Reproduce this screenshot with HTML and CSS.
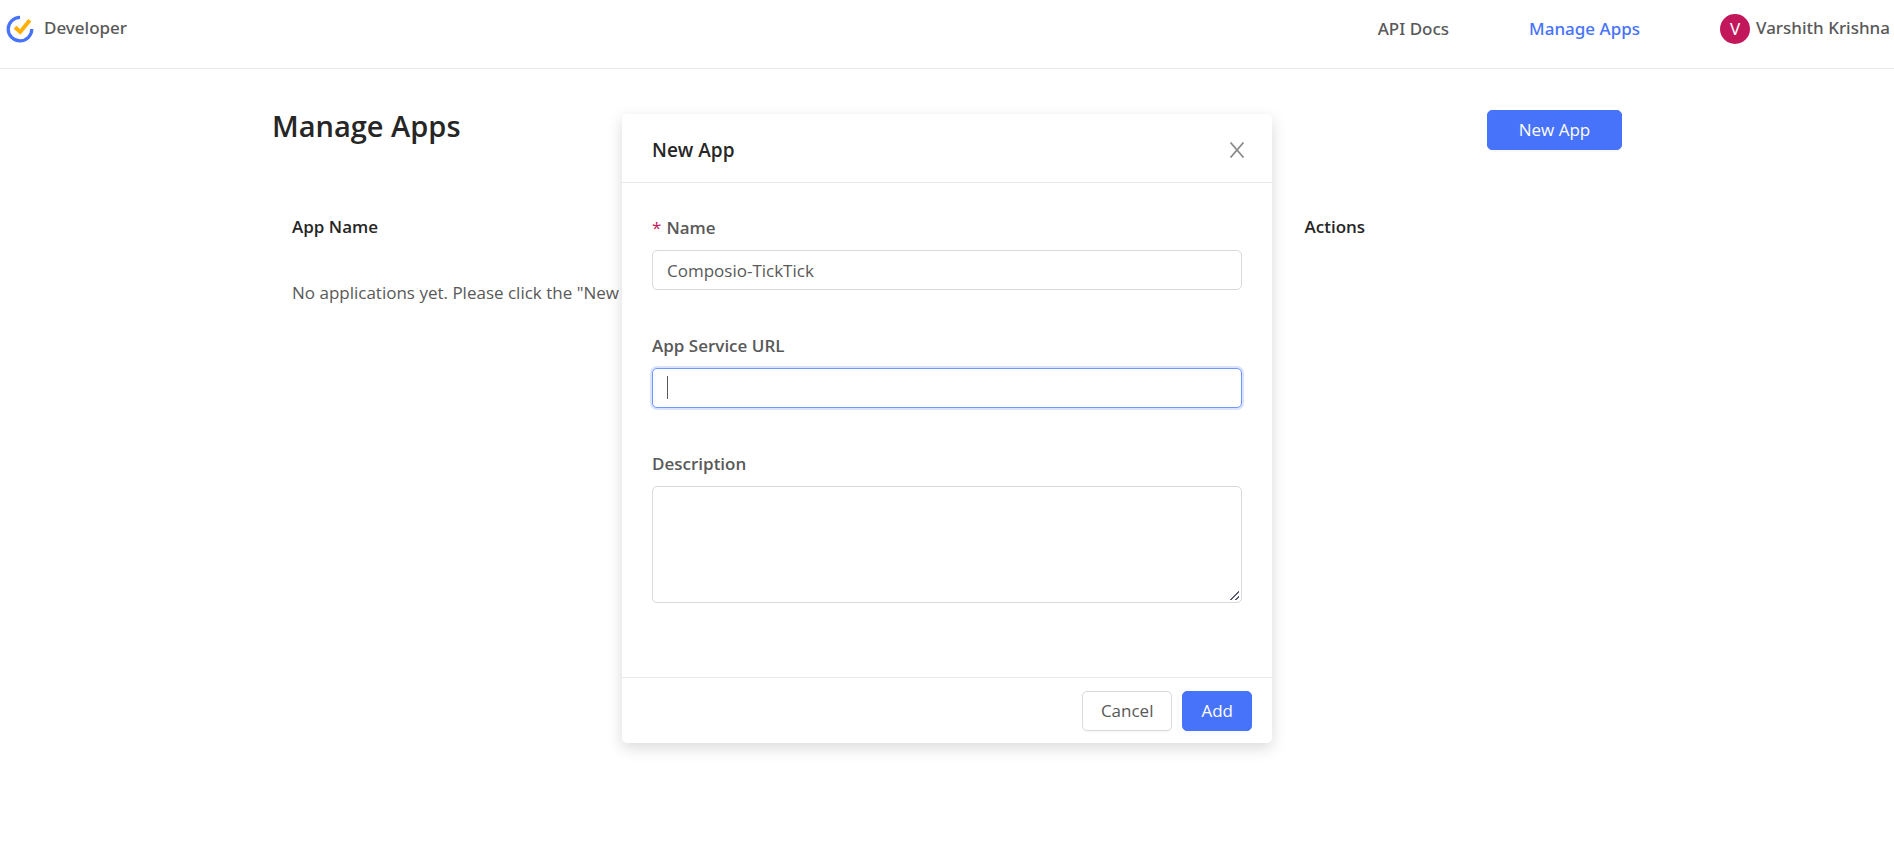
FILE: index.html
```html
<!DOCTYPE html>
<html lang="en">
  <head>
    <meta charset="utf-8" />
    <meta name="viewport" content="width=device-width, initial-scale=1" />
    <title>Manage Apps</title>
    <link rel="stylesheet" href="styles.css">
  </head>
  <body>
    <header class="header">
      <a class="logo" href="#">
        <svg class="logo-icon" viewBox="0 0 28 28" aria-hidden="true">
          <path d="M14 2.3A11.8 11.8 0 1 0 25.8 14" fill="none" stroke="#4772fa" stroke-width="3.2" />
          <path d="M9 12.3l5.2 4.6L23.8 5.2" fill="none" stroke="#ffb000" stroke-width="4" />
        </svg>
        <span>Developer</span>
      </a>
      <nav class="nav">
        <a class="nav-link" href="#">API Docs</a>
        <a class="nav-link active" href="#">Manage Apps</a>
        <a class="user" href="#">
          <span class="avatar">V</span>
          <span class="user-name">Varshith Krishna</span>
        </a>
      </nav>
    </header>

    <main class="container">
      <div class="title-row">
        <h1>Manage Apps</h1>
        <button class="btn btn-primary btn-new" type="button">New App</button>
      </div>
      <table class="apps">
        <thead>
          <tr>
            <th class="col-name">App Name</th>
            <th>Actions</th>
          </tr>
        </thead>
        <tbody>
          <tr>
            <td colspan="2">No applications yet. Please click the "New App" button</td>
          </tr>
        </tbody>
      </table>
    </main>

    <div class="modal-wrap">
      <form class="modal" role="dialog" aria-labelledby="modal-title">
        <div class="modal-header">
          <h2 id="modal-title">New App</h2>
          <button class="close" type="button" aria-label="Close">
            <svg viewBox="0 0 16 16" aria-hidden="true">
              <path d="M1.5 0.5l13 15M14.5 0.5l-13 15" fill="none" stroke="#8c8c8c" stroke-width="1.8" />
            </svg>
          </button>
        </div>
        <div class="modal-body">
          <div class="form-group">
            <label class="required" for="name">Name</label>
            <input id="name" type="text" name="name" value="Composio-TickTick" autocomplete="off" />
          </div>
          <div class="form-group">
            <label for="url">App Service URL</label>
            <div class="field focused">
              <input id="url" type="text" name="url" value="" autocomplete="off" />
            </div>
          </div>
          <div class="form-group">
            <label for="description">Description</label>
            <textarea id="description" name="description"></textarea>
          </div>
        </div>
        <div class="modal-footer">
          <button class="btn" type="button">Cancel</button>
          <button class="btn btn-primary" type="submit">Add</button>
        </div>
      </form>
    </div>
  </body>
</html>
```

FILE: styles.css
```css
* {
  box-sizing: border-box;
}
body {
  margin: 0;
  background: #fff;
  color: #595959;
  font-family: "Open Sans", "Noto Sans", sans-serif;
  font-size: 17px;
  line-height: 26px;
}
a {
  color: inherit;
  text-decoration: none;
}
h1,
h2 {
  margin: 0;
  color: #262626;
  font-weight: 600;
}
.header {
  display: flex;
  justify-content: space-between;
  align-items: center;
  height: 69px;
  padding: 0 4px 10px 6px;
  border-bottom: 1px solid #e8e8e8;
  font-family: "Noto Sans", "Open Sans", sans-serif;
  font-weight: 500;
}
.logo {
  display: flex;
  align-items: center;
  gap: 10px;
}
.logo-icon {
  width: 28px;
  height: 28px;
}
.logo span,
.user-name {
  padding-bottom: 3px;
}
.nav {
  display: flex;
  align-items: center;
  gap: 80px;
}
.active {
  color: #4772fa;
}
.user {
  display: flex;
  align-items: center;
  gap: 6px;
}
.avatar {
  width: 30px;
  border-radius: 50%;
  background: #c2185b;
  color: #fff;
  font-weight: 400;
  line-height: 30px;
  text-align: center;
}
.container {
  width: 72%;
  max-width: 1350px;
  margin: 0 auto;
  padding-top: 41px;
}
.title-row {
  display: flex;
  justify-content: space-between;
  align-items: flex-start;
}
h1 {
  font-size: 29px;
  line-height: 32px;
}
.btn {
  height: 40px;
  padding: 0 18px;
  border: 1px solid #d9d9d9;
  border-radius: 5px;
  background: #fff;
  box-shadow: 0 2px 0 rgba(0, 0, 0, 0.02);
  color: #595959;
  font: inherit;
  cursor: pointer;
}
.btn-primary {
  border-color: #4772fa;
  background: #4772fa;
  color: #fff;
}
.btn-new {
  width: 135px;
}
.apps {
  width: 100%;
  margin-top: 44px;
  border-collapse: collapse;
  table-layout: fixed;
}
.apps th,
.apps td {
  padding: 20px;
  text-align: left;
}
.apps th {
  color: #262626;
  font-weight: 600;
}
.col-name {
  width: 75%;
}
.modal-wrap {
  position: absolute;
  top: 114px;
  left: 0;
  right: 0;
}
.modal {
  width: 650px;
  max-width: 95%;
  margin: 0 auto;
  border-radius: 5px;
  background: #fff;
  box-shadow: 0 5px 15px rgba(0, 0, 0, 0.15);
}
.modal-header {
  display: flex;
  justify-content: space-between;
  align-items: center;
  height: 69px;
  padding: 3px 27px 0 30px;
  border-bottom: 1px solid #e8e8e8;
}
h2 {
  font-size: 19px;
  line-height: 28px;
}
.close {
  display: flex;
  padding: 0;
  border: none;
  background: none;
  cursor: pointer;
}
.close svg {
  width: 16px;
  height: 16px;
}
.modal-body {
  padding: 31px 30px 74px;
  display: flex;
  flex-direction: column;
  gap: 42px;
}
.form-group {
  display: flex;
  flex-direction: column;
  gap: 8px;
}
label {
  line-height: 28px;
  font-weight: 600;
}
.required::before {
  content: "*";
  margin-right: 5px;
  color: #c2185b;
  font-weight: 400;
}
input,
textarea {
  display: block;
  width: 100%;
  height: 40px;
  padding: 5px 14px;
  border: 1px solid #d9d9d9;
  border-radius: 5px;
  outline: none;
  background: #fff;
  color: #595959;
  font: inherit;
}
textarea {
  height: 117px;
  resize: vertical;
}
textarea::-webkit-resizer {
  background: linear-gradient(135deg, transparent 46%, #5a5a6e 46%, #5a5a6e 60%, transparent 60%, transparent 74%, #5a5a6e 74%, #5a5a6e 88%, transparent 88%) 4px 4px / 9px 9px no-repeat;
}
.field {
  position: relative;
}
.focused input {
  border-color: #7096ff;
  box-shadow: 0 0 0 2px rgba(71, 114, 250, 0.2);
  caret-color: transparent;
}
/* text cursor */
.focused::after {
  content: "";
  position: absolute;
  top: 8px;
  left: 15px;
  width: 1px;
  height: 23px;
  background: #595959;
}
.modal-footer {
  display: flex;
  justify-content: flex-end;
  gap: 10px;
  padding: 13px 20px 12px;
  border-top: 1px solid #e8e8e8;
}
```
